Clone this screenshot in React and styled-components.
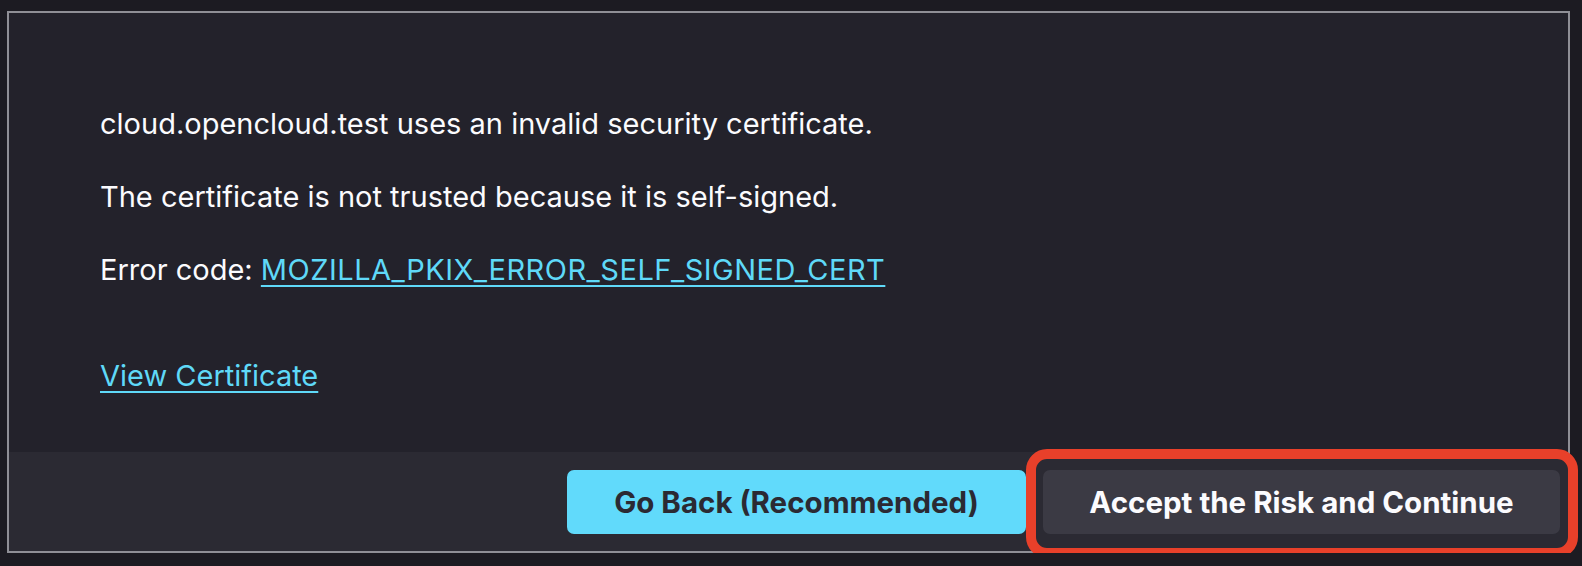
import React from "react";
import styled, { createGlobalStyle } from "styled-components";

const GlobalStyle = createGlobalStyle`
  html, body {
    margin: 0;
    padding: 0;
    background: #1c1b22;
  }
  body {
    font-family: Inter, "Noto Sans", sans-serif;
    color: #fbfbfe;
  }
`;

const Page = styled.div`
  padding: 11px 0 0 7px;
`;

const Panel = styled.div`
  width: 1559px;
  border: 2px solid #8f8f96;
  background: #23222b;
`;

const Body = styled.div`
  padding: 89px 0 54px 91px;
`;

const Para = styled.p`
  margin: 0 0 ${(p) => p.gap || 29}px 0;
  font-size: 29px;
  line-height: 44px;
  &:last-child {
    margin-bottom: 0;
  }
`;

const Link = styled.a`
  color: #5fd9f8;
  text-decoration: underline;
  text-decoration-thickness: 2px;
  text-underline-offset: 5px;
  letter-spacing: ${(p) => p.spread || 0}px;
  cursor: pointer;
`;

const Footer = styled.div`
  display: flex;
  justify-content: flex-end;
  gap: 17px;
  padding: 18px 8px 17px 0;
  background: #2b2a33;
`;

const Button = styled.button`
  height: 64px;
  width: ${(p) => p.w}px;
  border: none;
  border-radius: 7px;
  font-family: Inter, "Noto Sans", sans-serif;
  font-weight: 700;
  font-size: 29.5px;
  background: ${(p) => (p.primary ? "#61dafb" : "#3b3a44")};
  color: ${(p) => (p.primary ? "#2b2a33" : "#fbfbfe")};
  cursor: pointer;
`;

const Marked = styled.div`
  position: relative;
  display: flex;
`;

const Highlight = styled.div`
  position: absolute;
  top: -21px;
  left: -17px;
  right: -18px;
  bottom: -24px;
  border: 10px solid #e8402a;
  border-radius: 21px;
  pointer-events: none;
`;

export default function App() {
  return (
    <>
      <GlobalStyle />
      <Page>
        <Panel>
          <Body>
            <Para>cloud.opencloud.test uses an invalid security certificate.</Para>
            <Para>The certificate is not trusted because it is self-signed.</Para>
            <Para gap={62}>
              Error code: <Link spread={0.5}>MOZILLA_PKIX_ERROR_SELF_SIGNED_CERT</Link>
            </Para>
            <Para>
              <Link>View Certificate</Link>
            </Para>
          </Body>
          <Footer>
            <Button primary w={459}>Go Back (Recommended)</Button>
            <Marked>
              <Button w={517}>Accept the Risk and Continue</Button>
              <Highlight />
            </Marked>
          </Footer>
        </Panel>
      </Page>
    </>
  );
}
